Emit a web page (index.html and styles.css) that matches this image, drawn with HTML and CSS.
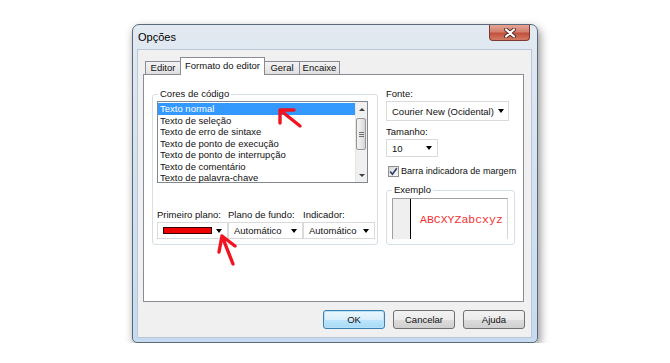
FILE: index.html
```html
<!DOCTYPE html>
<html>
	<head>
		<meta charset="UTF-8">
		<title>Opções</title>
		<link rel="stylesheet" href="styles.css">
	</head>
	<body>
		<div class="window">
			<div class="titlebar">
				<span class="title">Opções</span>
				<div class="close">
					<svg width="14" height="10" viewBox="0 0 14 10">
						<path d="M3 1.5 L11 8.5 M11 1.5 L3 8.5" stroke="#5a2a25" stroke-width="4" stroke-linecap="round"/>
						<path d="M3 1.5 L11 8.5 M11 1.5 L3 8.5" stroke="#fff" stroke-width="2.2" stroke-linecap="round"/>
					</svg>
				</div>
			</div>
			<div class="client">
				<div class="tabs">
					<div class="tab t-editor">Editor</div>
					<div class="tab t-formato active">Formato do editor</div>
					<div class="tab t-geral">Geral</div>
					<div class="tab t-encaixe">Encaixe</div>
				</div>
				<div class="panel">
					<fieldset class="group colors">
						<legend>Cores de código</legend>
						<div class="listbox">
							<ul class="items">
								<li class="selected">Texto normal</li>
								<li>Texto de seleção</li>
								<li>Texto de erro de sintaxe</li>
								<li>Texto de ponto de execução</li>
								<li>Texto de ponto de interrupção</li>
								<li>Texto de comentário</li>
								<li>Texto de palavra-chave</li>
							</ul>
							<div class="scrollbar">
								<div class="sb-arrow up"></div>
								<div class="sb-track">
									<div class="thumb"><span></span><span></span><span></span></div>
								</div>
								<div class="sb-arrow down"></div>
							</div>
						</div>
						<div class="pickers">
							<div class="picker p1">
								<div class="label">Primeiro plano:</div>
								<div class="combo"><span class="swatch"></span><span class="caret"></span></div>
							</div>
							<div class="picker p2">
								<div class="label">Plano de fundo:</div>
								<div class="combo"><span class="value">Automático</span><span class="caret"></span></div>
							</div>
							<div class="picker p3">
								<div class="label">Indicador:</div>
								<div class="combo"><span class="value">Automático</span><span class="caret"></span></div>
							</div>
						</div>
					</fieldset>
					<div class="side">
						<div class="label">Fonte:</div>
						<div class="combo font"><span class="value">Courier New (Ocidental)</span><span class="caret"></span></div>
						<div class="label size-label">Tamanho:</div>
						<div class="combo size"><span class="value">10</span><span class="caret"></span></div>
						<div class="check">
							<span class="box">
								<svg width="9" height="9" viewBox="0 0 9 9"><path d="M1.2 4.6 L3.4 7.2 L7.8 1.2" fill="none" stroke="#2c3c6c" stroke-width="1.6"/></svg>
							</span>
							<span class="check-text">Barra indicadora de margem</span>
						</div>
						<fieldset class="group sample">
							<legend>Exemplo</legend>
							<div class="preview">
								<div class="gutter"></div>
								<span class="sample-text">ABCXYZabcxyz</span>
							</div>
						</fieldset>
					</div>
				</div>
				<div class="buttons">
					<div class="btn default">OK</div>
					<div class="btn">Cancelar</div>
					<div class="btn">Ajuda</div>
				</div>
			</div>
		</div>

		<!-- red annotation arrows drawn over the screenshot -->
		<svg class="marks" width="670" height="363" viewBox="0 0 670 363">
			<g stroke="#f01420" stroke-width="3.4" fill="none" stroke-linecap="round" stroke-linejoin="round">
				<path d="M300 126 L280 110 M280 110 L294 110 M280 110 L280 123"/>
				<path d="M233 264 L222 236 M222 236 L219 252 M222 236 L235 246"/>
			</g>
		</svg>
	</body>
</html>
```

FILE: styles.css
```css
body{
	margin: 0;
	padding: 0;
	background: #ffffff;
	font-family: "Liberation Sans", Arial, sans-serif;
	font-size: 9.5px;
	color: #111;
	position: relative;
}
.window{
	margin: 24px 0 0 132px;
	width: 406px;
	height: 319px;
	box-sizing: border-box;
	border: 1px solid #5b6878;
	border-radius: 7px 7px 5px 5px;
	background: linear-gradient(#e2e9f1, #d6e3f0 40%, #c6dbf0);
	box-shadow: 2px 4px 10px rgba(0,0,0,0.45);
	padding: 0 5px 4px 4px;
	display: flex;
	flex-direction: column;
}
.titlebar{
	height: 24px;
	display: flex;
	align-items: center;
	padding-left: 1px;
}
.title{
	font-size: 11px;
	color: #000;
}
.close{
	margin-left: auto;
	margin-right: 2px;
	align-self: flex-start;
	width: 41px;
	height: 16px;
	box-sizing: border-box;
	border: 1px solid #7d3a32;
	border-top: none;
	border-radius: 0 0 4px 4px;
	background: linear-gradient(#e7a596, #d2806e 45%, #c2503f 55%, #d27a62);
	display: flex;
	align-items: center;
	justify-content: center;
}
.client{
	height: 289px;
	box-sizing: border-box;
	background: #f0f0f0;
	border: 1px solid #b9c8d8;
	padding: 7px 7px 0 5px;
	display: flex;
	flex-direction: column;
}

/* tabs */
.tabs{
	display: flex;
	align-items: flex-end;
	height: 17px;
	padding-left: 2px;
}
.tab{
	height: 13px;
	box-sizing: border-box;
	border: 1px solid #898c95;
	border-bottom: none;
	background: linear-gradient(#f3f3f3, #ebebeb 50%, #dedede);
	text-align: center;
	line-height: 12px;
	margin-left: -1px;
}
.t-editor{ width: 36px; margin-left: 0; }
.t-formato{ width: 85px; }
.t-geral{ width: 36px; }
.t-encaixe{ width: 41px; }
.tab.active{
	height: 18px;
	background: #fff;
	margin-bottom: -1px;
	position: relative;
	z-index: 1;
	line-height: 14px;
	padding-top: 1px;
}
.panel{
	height: 228px;
	box-sizing: border-box;
	border: 1px solid #898c95;
	background: #fff;
	display: flex;
	align-items: flex-start;
	gap: 8px;
	padding: 13px 8px 0 8px;
}

/* group boxes */
.group{
	margin: 0;
	min-width: 0;
	box-sizing: border-box;
	border: 1px solid #d5dfe5;
	border-radius: 3px;
}
.group legend{
	padding: 0 2px;
	margin-left: 1px;
	line-height: 12px;
}
.colors{
	width: 226px;
	height: 157px;
	padding: 0 0 0 4px;
}

/* list box */
.listbox{
	margin-top: 1px;
	width: 211px;
	height: 82px;
	box-sizing: border-box;
	border: 1px solid #828790;
	display: flex;
}
.items{
	list-style: none;
	margin: 0;
	padding: 1px 0 0 0;
	width: 198px;
}
.items li{
	height: 11.5px;
	line-height: 11.5px;
	padding-left: 2px;
	white-space: nowrap;
}
.items li.selected{
	background: #3399ff;
	color: #fff;
}
.scrollbar{
	width: 11px;
	display: flex;
	flex-direction: column;
	background: #f0f0f0;
	border-left: 1px solid #e6e6e6;
}
.sb-arrow{
	height: 14px;
	display: flex;
	align-items: center;
	justify-content: center;
}
.sb-arrow::after{
	content: "";
	border-left: 3px solid transparent;
	border-right: 3px solid transparent;
}
.sb-arrow.up::after{ border-bottom: 3px solid #404040; }
.sb-arrow.down::after{ border-top: 3px solid #404040; }
.sb-track{
	flex: 1;
	padding-top: 2px;
}
.thumb{
	width: 10px;
	height: 32px;
	box-sizing: border-box;
	border: 1px solid #979797;
	border-radius: 2px;
	background: linear-gradient(90deg, #f3f3f3, #e8e8e8 50%, #d6d6d6);
	display: flex;
	flex-direction: column;
	align-items: center;
	justify-content: center;
	gap: 1px;
}
.thumb span{
	width: 5px;
	height: 1px;
	background: #6e6e6e;
}

/* color pickers */
.pickers{
	display: flex;
	margin-top: 26px;
}
.p1{ width: 71px; }
.p2{ width: 75px; }
.p3{ width: 72px; }
.label{
	line-height: 12px;
	white-space: nowrap;
}
.combo{
	margin-top: 1px;
	height: 17px;
	box-sizing: border-box;
	border: 1px solid #dadada;
	background: #fff;
	display: flex;
	align-items: center;
	padding: 0 5px 0 5px;
}
.combo .value{
	flex: 1;
	white-space: nowrap;
}
.caret{
	margin-left: auto;
	border-left: 3.5px solid transparent;
	border-right: 3.5px solid transparent;
	border-top: 4px solid #000;
}
.swatch{
	width: 49px;
	height: 7px;
	box-sizing: border-box;
	border: 1px solid #3a0000;
	background: #ee0000;
}

/* right column */
.side{
	width: 129px;
	display: flex;
	flex-direction: column;
	align-items: flex-start;
}
.combo.font{
	width: 123px;
	height: 20px;
	padding-right: 4px;
}
.size-label{
	margin-top: 5px;
}
.combo.size{
	width: 52px;
	height: 18px;
	padding-right: 5px;
}
.check{
	margin-top: 8px;
	display: flex;
	align-items: center;
	height: 12px;
	white-space: nowrap;
	gap: 2px;
}
.check-text{
	font-size: 9.1px;
}
.box{
	margin-left: 2px;
	width: 11px;
	height: 11px;
	box-sizing: border-box;
	border: 1px solid #8e8f8f;
	background: linear-gradient(135deg, #d8d8d8, #f8f8f8);
	display: flex;
	align-items: center;
	justify-content: center;
}
.sample{
	margin-top: 7px;
	width: 129px;
	height: 61px;
	padding: 0 6px 0 5px;
}
.sample legend{
	margin-left: 0;
}
.preview{
	margin-top: 2px;
	height: 41px;
	box-sizing: border-box;
	border-top: 1px solid #a0a0a0;
	border-left: 1px solid #a0a0a0;
	border-right: 1px solid #d4d4d4;
	display: flex;
	align-items: center;
}
.gutter{
	align-self: stretch;
	width: 17px;
	background: #efefef;
	border-right: 1px solid #000;
}
.sample-text{
	margin-left: 9px;
	font-family: "Liberation Mono", "Courier New", monospace;
	font-size: 11.5px;
	color: #f23030;
}

/* dialog buttons */
.buttons{
	display: flex;
	justify-content: flex-end;
	gap: 8px;
	margin-top: 8px;
	margin-right: -1px;
}
.btn{
	width: 62px;
	height: 19px;
	box-sizing: border-box;
	border: 1px solid #707070;
	border-radius: 3px;
	background: linear-gradient(#f2f2f2, #ebebeb 50%, #dddddd 51%, #cfcfcf);
	display: flex;
	align-items: center;
	justify-content: center;
}
.btn.default{
	border-color: #3c7fb1;
	background: linear-gradient(#eaf6fd, #d9f0fc 50%, #bee6fd 51%, #a7d9f5);
	box-shadow: inset 0 0 0 1px #b8e2f8;
}

.marks{
	position: absolute;
	left: 0;
	top: 0;
	pointer-events: none;
}
```
